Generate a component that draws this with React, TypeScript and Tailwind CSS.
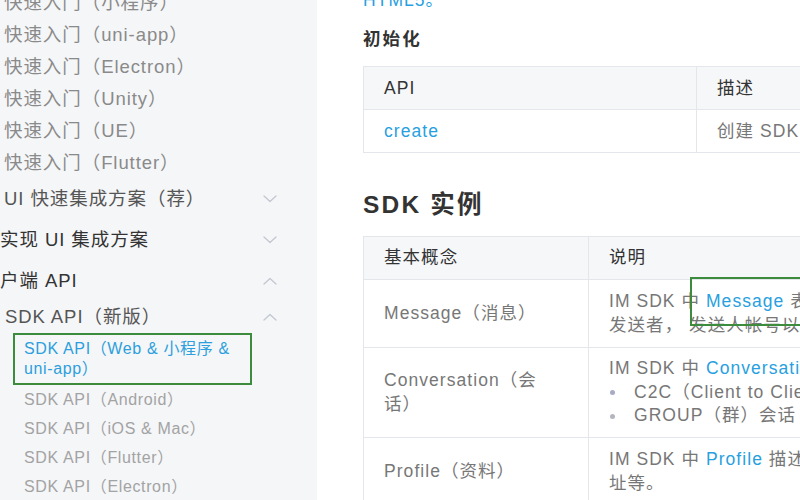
import React from 'react';

const FONT = "font-['Liberation_Sans','Noto_Sans_CJK_SC',sans-serif]";

function Chevron({ up = false }: { up?: boolean }) {
  return (
    <svg width="14" height="8" viewBox="0 0 14 8" fill="none" className="shrink-0">
      <polyline
        points={up ? '1,7 7,1.5 13,7' : '1,1 7,6.5 13,1'}
        stroke="#c3c7cf"
        strokeWidth="1.3"
        strokeLinecap="round"
        strokeLinejoin="round"
      />
    </svg>
  );
}

const quickStarts = ['小程序', 'uni-app', 'Electron', 'Unity', 'UE', 'Flutter'];
const sdkApis = ['Android', 'iOS & Mac', 'Flutter', 'Electron'];

function Sidebar() {
  return (
    <aside className="w-[317px] shrink-0 bg-[#f5f6f8] mt-[-13px] text-[18.5px] tracking-[0.05em]">
      {/* Quick start entries */}
      {quickStarts.map((name) => (
        <div key={name} className="h-8 flex items-center pl-1 text-[#8a8a8a] whitespace-nowrap">
          快速入门（{name}）
        </div>
      ))}

      {/* Top-level groups */}
      <div className="h-10 flex items-center justify-between pl-1 pr-10 text-[#555]">
        <span>UI 快速集成方案（荐）</span>
        <Chevron />
      </div>
      <div className="h-[42px] flex items-center justify-between pr-10 text-[#333]">
        <span>实现 UI 集成方案</span>
        <Chevron />
      </div>
      <div className="h-10 flex items-center justify-between pr-10 text-[#333]">
        <span>户端 API</span>
        <Chevron up />
      </div>
      <div className="h-8 flex items-center justify-between pl-[5px] pr-10 text-[#555]">
        <span>SDK API（新版）</span>
        <Chevron up />
      </div>

      {/* Active entry */}
      <div className="ml-[13px] w-[239px] h-[52px] border-2 border-[#3d8b3d] pl-[9px] pt-[4px] text-[16px] leading-5 tracking-[0.04em] text-[#2c9fdc] whitespace-nowrap">
        SDK API（Web & 小程序 &
        <br />
        uni-app）
      </div>

      {sdkApis.map((name) => (
        <div key={name} className="h-[29px] flex items-center pl-6 text-[16px] tracking-[0.04em] text-[#a3a3a3] whitespace-nowrap">
          SDK API（{name}）
        </div>
      ))}
    </aside>
  );
}

function Link({ children }: { children: React.ReactNode }) {
  return <span className="text-[#289fe0]">{children}</span>;
}

function Content() {
  return (
    <main className="relative flex-1 overflow-hidden pl-[46px] text-[17.5px] tracking-[0.06em]">
      <p className="mt-[-12px] h-6 leading-6 text-[#289fe0]">HTML5。</p>

      <h3 className="mt-[14px] h-[26px] leading-[26px] text-[17.5px] font-bold tracking-[0.12em] text-[#333]">初始化</h3>

      {/* Init table */}
      <div className="mt-[14px] w-[700px] border border-[#e3e6eb]">
        <div className="grid grid-cols-[333px_1fr] h-[42px] bg-[#f6f7f9] text-[#333]">
          <div className="flex items-center px-5 border-r border-[#e3e6eb]">API</div>
          <div className="flex items-center px-5">描述</div>
        </div>
        <div className="grid grid-cols-[333px_1fr] h-[43px] border-t border-[#e3e6eb] text-[#777]">
          <div className="flex items-center px-5 border-r border-[#e3e6eb]">
            <Link>create</Link>
          </div>
          <div className="flex items-center px-5 whitespace-nowrap">创建 SDK 实例</div>
        </div>
      </div>

      <h2 className="mt-[34px] h-9 leading-9 text-[24.5px] font-bold tracking-[0.09em] text-[#333]">SDK 实例</h2>

      {/* Concept table */}
      <div className="mt-[13px] w-[760px] border border-[#e3e6eb] leading-[23.5px] text-[#777]">
        <div className="grid grid-cols-[225px_1fr] h-[42px] bg-[#f6f7f9] text-[#333]">
          <div className="flex items-center px-5 border-r border-[#e3e6eb]">基本概念</div>
          <div className="flex items-center px-5">说明</div>
        </div>

        <div className="grid grid-cols-[225px_1fr] h-[68px] border-t border-[#e3e6eb]">
          <div className="flex items-center pl-5 pr-10 border-r border-[#e3e6eb]">Message（消息）</div>
          <div className="flex flex-col justify-center px-5 whitespace-nowrap">
            <span>
              IM SDK 中 <Link>Message</Link> 表示要发送的一条消息，包含消息的
            </span>
            <span>发送者， 发送人帐号以及消息内容等。</span>
          </div>
        </div>

        <div className="grid grid-cols-[225px_1fr] h-[90px] border-t border-[#e3e6eb]">
          <div className="flex items-center pl-5 pr-10 border-r border-[#e3e6eb]">Conversation（会话）</div>
          <div className="flex flex-col justify-center px-5 whitespace-nowrap">
            <span>
              IM SDK 中 <Link>Conversation</Link> 描述一个会话，分为两种：
            </span>
            <span className="flex items-center">
              <span className="w-[5px] h-[5px] rounded-full bg-[#a7abc4] mr-[19px] ml-[1px]" />
              C2C（Client to Client）端到端会话
            </span>
            <span className="flex items-center">
              <span className="w-[5px] h-[5px] rounded-full bg-[#b3b6bf] mr-[19px] ml-[1px]" />
              GROUP（群）会话
            </span>
          </div>
        </div>

        <div className="grid grid-cols-[225px_1fr] h-[68px] border-t border-[#e3e6eb]">
          <div className="flex items-center pl-5 pr-10 border-r border-[#e3e6eb]">Profile（资料）</div>
          <div className="flex flex-col justify-center px-5 whitespace-nowrap">
            <span>
              IM SDK 中 <Link>Profile</Link> 描述用户的资料，包括昵称、头像地
            </span>
            <span>址等。</span>
          </div>
        </div>
      </div>

      {/* Highlight overlay */}
      <div className="absolute left-[373px] top-[277px] w-[200px] h-[49px] border-2 border-[#3d8b3d]" />
    </main>
  );
}

export default function App() {
  return (
    <div className={`flex w-[800px] h-[500px] overflow-hidden bg-white ${FONT}`}>
      <Sidebar />
      <Content />
    </div>
  );
}
